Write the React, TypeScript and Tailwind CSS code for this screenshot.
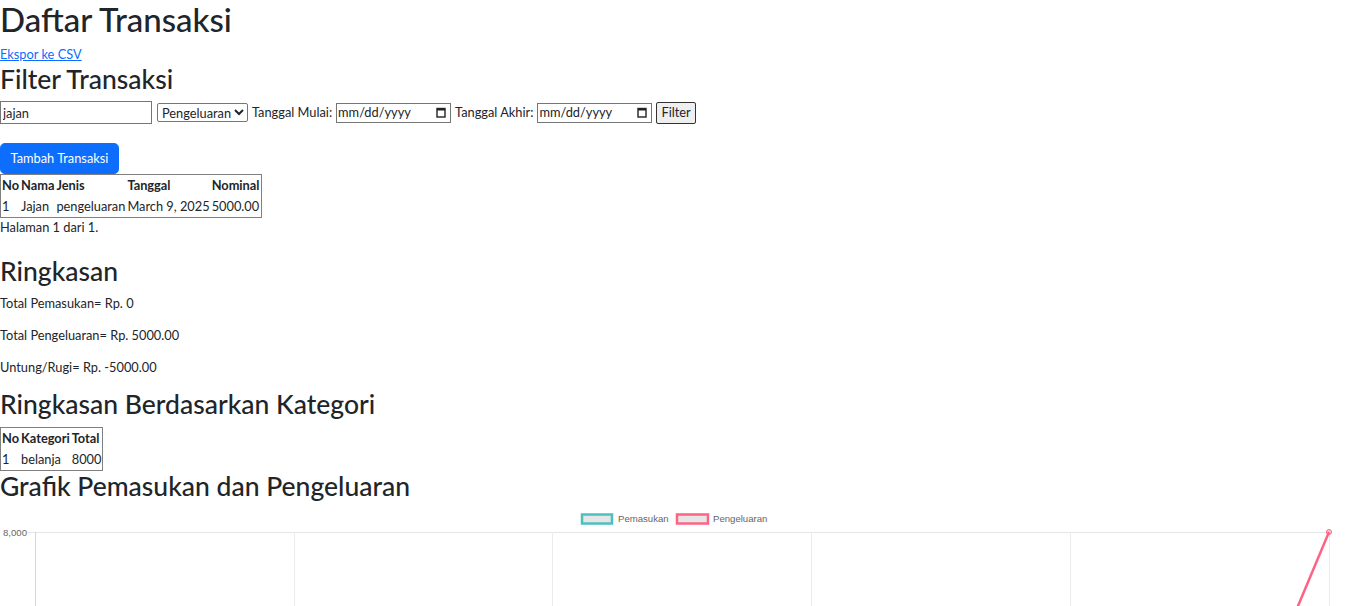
import React from 'react';

const rows = [{ no: 1, nama: 'Jajan', jenis: 'pengeluaran', tanggal: 'March 9, 2025', nominal: '5000.00' }];
const kategori = [{ no: 1, nama: 'belanja', total: '8000' }];

const DateBox: React.FC = () => (
  <span className="inline-flex h-[20px] w-[115px] items-center justify-between border border-[#767676] pl-[1px] pr-[4px] leading-none">
    <span>mm/dd/yyyy</span>
    <svg width="10" height="11" viewBox="0 0 10 11">
      <rect x="1" y="1.5" width="8" height="8.5" fill="none" stroke="#222" strokeWidth="1.4" />
      <rect x="1" y="1.5" width="8" height="2" fill="#222" />
    </svg>
  </span>
);

const Chart: React.FC = () => {
  const xs = [35, 294, 552, 811, 1070, 1329];
  const o = 508;
  return (
    <svg width="1345" height="400" className="block" style={{ fontFamily: '"Liberation Sans", Arial, sans-serif' }}>
      {/* legend */}
      <rect x="582" y={514.5 - o} width="30" height="9" fill="#e6e6e6" stroke="rgb(75,192,192)" strokeWidth="2.5" />
      <text x="618" y={522 - o} fontSize="9.6" fill="#666">Pemasukan</text>
      <rect x="677" y={514.5 - o} width="31" height="9" fill="#e6e6e6" stroke="rgb(255,99,132)" strokeWidth="2.5" />
      <text x="713" y={522 - o} fontSize="9.6" fill="#666">Pengeluaran</text>
      {/* sumbu y */}
      <text x="3" y={535.5 - o} fontSize="9.6" fill="#666">8,000</text>
      <line x1="27" y1={532.5 - o} x2="1330" y2={532.5 - o} stroke="#e5e5e5" strokeWidth="1" />
      {xs.map((x, i) => (
        <line key={x} x1={x + 0.5} y1={532 - o} x2={x + 0.5} y2="400" stroke={i === 0 ? '#d6d6d6' : '#ebebeb'} strokeWidth="1" />
      ))}
      {/* data pengeluaran */}
      <line x1="1329" y1={532 - o} x2="1070" y2={1150 - o} stroke="rgb(255,99,132)" strokeWidth="2.5" />
      <circle cx="1329" cy={532 - o} r="2.5" fill="rgba(255,99,132,0.3)" stroke="rgb(255,99,132)" strokeWidth="1" />
    </svg>
  );
};

export default function App() {
  return (
    <div className="h-[606px] overflow-hidden bg-white text-[12.8px] leading-[1.5] text-[#212529]" style={{ fontFamily: '"Segoe UI", Lato, sans-serif' }}>
      <h1 className="mb-[6.4px] text-[33px] font-medium leading-[38.4px]">Daftar Transaksi</h1>
      <a href="#" className="text-[#0d6efd] underline">Ekspor ke CSV</a>
      <h2 className="mb-[6.4px] text-[26.5px] font-medium leading-[30.7px]">Filter Transaksi</h2>

      <div className="flex items-center gap-[4px]">
        <input
          type="text"
          defaultValue="jajan"
          className="h-[23px] w-[152px] border border-[#767676] px-[2px] text-[12.8px]"
        />
        <select defaultValue="Pengeluaran" className="ml-[1px] h-[19px] w-[91px] rounded-[2px] border border-[#767676] text-[12.8px]">
          <option>Pengeluaran</option>
          <option>Pemasukan</option>
        </select>
        <label>Tanggal Mulai:</label>
        <DateBox />
        <label>Tanggal Akhir:</label>
        <DateBox />
        <button className="h-[22px] rounded-[2px] border border-[#333] bg-[#efefef] px-[4px] text-[12.8px]">Filter</button>
      </div>

      <button className="mt-[19px] rounded-[4.8px] border border-[#0d6efd] bg-[#0d6efd] px-[9.6px] py-[4.8px] leading-[19.2px] text-white">
        Tambah Transaksi
      </button>

      <table className="border-collapse border border-[#808080]">
        <thead>
          <tr>
            <th className="p-[1px] text-left font-bold">No</th>
            <th className="p-[1px] text-left font-bold">Nama</th>
            <th className="p-[1px] text-left font-bold">Jenis</th>
            <th className="p-[1px] text-left font-bold">Tanggal</th>
            <th className="p-[1px] text-left font-bold">Nominal</th>
          </tr>
        </thead>
        <tbody>
          {rows.map((r) => (
            <tr key={r.no}>
              <td className="p-[1px]">{r.no}</td>
              <td className="p-[1px]">{r.nama}</td>
              <td className="p-[1px]">{r.jenis}</td>
              <td className="p-[1px]">{r.tanggal}</td>
              <td className="p-[1px]">{r.nominal}</td>
            </tr>
          ))}
        </tbody>
      </table>
      <p className="mb-[12.8px]">Halaman 1 dari 1.</p>

      <h2 className="mt-[19px] mb-[6.4px] text-[26.5px] font-medium leading-[30.7px]">Ringkasan</h2>
      <p className="mb-[12.8px]">Total Pemasukan= Rp. 0</p>
      <p className="mb-[12.8px]">Total Pengeluaran= Rp. 5000.00</p>
      <p className="mb-[12.8px]">Untung/Rugi= Rp. -5000.00</p>

      <h2 className="mb-[6.4px] text-[26.5px] font-medium leading-[30.7px]">Ringkasan Berdasarkan Kategori</h2>
      <table className="border-collapse border border-[#808080]">
        <thead>
          <tr>
            <th className="p-[1px] text-left font-bold">No</th>
            <th className="p-[1px] text-left font-bold">Kategori</th>
            <th className="p-[1px] text-left font-bold">Total</th>
          </tr>
        </thead>
        <tbody>
          {kategori.map((k) => (
            <tr key={k.no}>
              <td className="p-[1px]">{k.no}</td>
              <td className="p-[1px]">{k.nama}</td>
              <td className="p-[1px]">{k.total}</td>
            </tr>
          ))}
        </tbody>
      </table>

      <h2 className="mb-[6.4px] text-[26.5px] font-medium leading-[30.7px]">Grafik Pemasukan dan Pengeluaran</h2>
      <Chart />
    </div>
  );
}
